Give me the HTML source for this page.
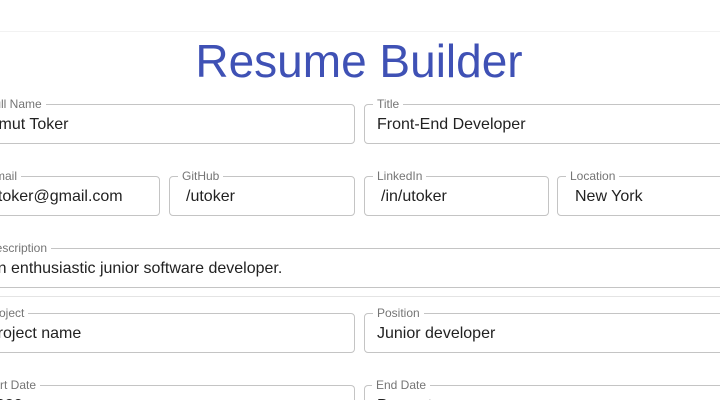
<!DOCTYPE html>
<html><head><meta charset="utf-8"><style>
html,body{margin:0;width:720px;height:400px;overflow:hidden;background:#fff}
body{font-family:"Liberation Sans",sans-serif;position:relative}
#w{position:absolute;left:0;top:0;width:720px;height:400px;overflow:hidden}
.top{position:absolute;left:0;top:31px;width:720px;border-top:1px solid #f2f2f2}
h1{position:absolute;left:0;width:718px;top:31px;margin:0;text-align:center;font-weight:400;font-size:46px;color:#3f51b5;line-height:60px}
.f{position:absolute;border:1px solid #c4c4c4;border-radius:4px;height:40px;box-sizing:border-box}
.f .l{position:absolute;top:-8px;left:8px;padding:0 4px;background:#fff;font-size:12px;color:#757575;line-height:14px;white-space:nowrap}
.f .v{position:absolute;left:12px;top:10px;font-size:16px;color:#222;line-height:20px;white-space:nowrap}
.b{height:15px;border-bottom:none;border-radius:4px 4px 0 0;overflow:hidden}
.b .l{top:-1px;line-height:0;height:0}
.div{position:absolute;left:0;width:720px;top:296px;border-top:1px solid #e4e4e4}
.lb{position:absolute;top:378px;font-size:12px;color:#757575;background:#fff;padding:0 4px;line-height:14px;white-space:nowrap}
</style></head><body><div id="w">
<div class="top"></div>
<h1>Resume Builder</h1>
<div class="f" style="left:-26px;top:104px;width:381px"><span class="l">Full Name</span><span class="v">Umut Toker</span></div>
<div class="f" style="left:364px;top:104px;width:380px"><span class="l">Title</span><span class="v">Front-End Developer</span></div>
<div class="f" style="left:-26px;top:176px;width:186px"><span class="l">Email</span><span class="v" style="left:14px">utoker@gmail.com</span></div>
<div class="f" style="left:169px;top:176px;width:186px"><span class="l">GitHub</span><span class="v" style="left:16px">/utoker</span></div>
<div class="f" style="left:364px;top:176px;width:185px"><span class="l">LinkedIn</span><span class="v" style="left:16px">/in/utoker</span></div>
<div class="f" style="left:557px;top:176px;width:190px"><span class="l">Location</span><span class="v" style="left:17px">New York</span></div>
<div class="f" style="left:-26px;top:248px;width:773px"><span class="l">Description</span><span class="v">An enthusiastic junior software developer.</span></div>
<div class="div"></div>
<div class="f" style="left:-26px;top:313px;width:381px"><span class="l">Project</span><span class="v">Project name</span></div>
<div class="f" style="left:364px;top:313px;width:380px"><span class="l">Position</span><span class="v">Junior developer</span></div>
<div class="f b" style="left:-26px;top:385px;width:381px"><span class="v">2020</span></div>
<div class="f b" style="left:364px;top:385px;width:380px"><span class="v">Present</span></div>
<span class="lb" style="left:-22px">Start Date</span>
<span class="lb" style="left:372px">End Date</span>
</div></body></html>
